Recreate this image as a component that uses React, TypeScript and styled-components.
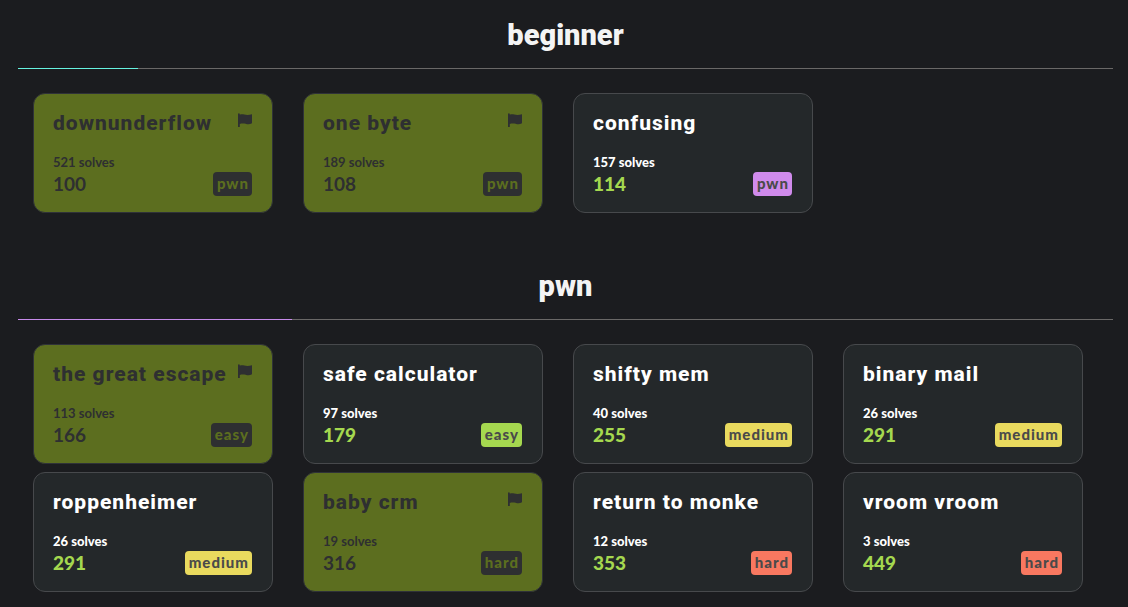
import React from "react";
import styled, { createGlobalStyle } from "styled-components";

const GlobalStyle = createGlobalStyle`
  * { box-sizing: border-box; }
  body {
    margin: 0;
    background: #1b1c1f;
    color: #ffffff;
    font-family: Lato, "Open Sans", sans-serif;
  }
`;

const tagColors = {
  pwn: "#d08bec",
  easy: "#a5d84f",
  medium: "#e9da5e",
  hard: "#f87860",
};

type Tag = keyof typeof tagColors;

interface Challenge {
  name: string;
  solves: number;
  points: number;
  tag: Tag;
  solved?: boolean;
}

interface Category {
  name: string;
  accent: string;
  progress: number;
  challenges: Challenge[];
}

const categories: Category[] = [
  {
    name: "beginner",
    accent: "#66f2e0",
    progress: 11,
    challenges: [
      { name: "downunderflow", solves: 521, points: 100, tag: "pwn", solved: true },
      { name: "one byte", solves: 189, points: 108, tag: "pwn", solved: true },
      { name: "confusing", solves: 157, points: 114, tag: "pwn" },
    ],
  },
  {
    name: "pwn",
    accent: "#c78bea",
    progress: 25,
    challenges: [
      { name: "the great escape", solves: 113, points: 166, tag: "easy", solved: true },
      { name: "safe calculator", solves: 97, points: 179, tag: "easy" },
      { name: "shifty mem", solves: 40, points: 255, tag: "medium" },
      { name: "binary mail", solves: 26, points: 291, tag: "medium" },
      { name: "roppenheimer", solves: 26, points: 291, tag: "medium" },
      { name: "baby crm", solves: 19, points: 316, tag: "hard", solved: true },
      { name: "return to monke", solves: 12, points: 353, tag: "hard" },
      { name: "vroom vroom", solves: 3, points: 449, tag: "hard" },
    ],
  },
];

const Page = styled.main`
  display: flex;
  flex-direction: column;
  gap: 49px;
  padding: 15px 15px 0 18px;
`;

const Heading = styled.h2`
  margin: 0 0 13px;
  text-align: center;
  color: #f4f4f4;
  font-family: Roboto, "Open Sans", sans-serif;
  font-size: 29px;
  font-weight: 900;
  line-height: 40px;
`;

const Track = styled.div`
  height: 1px;
  margin-bottom: 20px;
  background: #6a6867;
`;

const Progress = styled.div<{ $accent: string }>`
  height: 100%;
  background: ${(p) => p.$accent};
`;

const Grid = styled.div`
  display: flex;
  flex-wrap: wrap;
`;

const Card = styled.article<{ $solved?: boolean }>`
  display: flex;
  flex-direction: column;
  justify-content: space-between;
  width: 240px;
  height: 120px;
  margin: 4px 15px;
  padding: 15px 20px 15px 19px;
  border: 1px solid ${(p) => (p.$solved ? "#2f3238" : "#47494c")};
  border-radius: 12px;
  background: ${(p) => (p.$solved ? "#5c6e1f" : "#24282a")};
  color: ${(p) => (p.$solved ? "#2e2f31" : "#ffffff")};
`;

const CardTop = styled.div`
  display: flex;
  justify-content: space-between;
`;

const Title = styled.h3`
  margin: 0;
  font-family: Roboto, "Open Sans", sans-serif;
  font-size: 21px;
  font-weight: 800;
  letter-spacing: 1px;
  line-height: 28px;
  white-space: nowrap;
`;

const Flag = styled.svg`
  flex: none;
  width: 14px;
  height: 14px;
  margin-top: 4px;
`;

const CardBottom = styled.div`
  display: flex;
  justify-content: space-between;
  align-items: flex-end;
`;

const Solves = styled.div<{ $solved?: boolean }>`
  font-size: 13px;
  font-weight: ${(p) => (p.$solved ? 700 : 900)};
  line-height: 18px;
`;

const Points = styled.div<{ $solved?: boolean }>`
  color: ${(p) => (p.$solved ? "#2e2f31" : "#a5d84f")};
  font-size: 19px;
  font-weight: ${(p) => (p.$solved ? 700 : 900)};
  line-height: 26px;
`;

const Badge = styled.span<{ $tag: Tag; $solved?: boolean }>`
  margin-bottom: 1px;
  padding: 0 3px 2px 4px;
  border-radius: 4px;
  background: ${(p) => (p.$solved ? "#2e2f31" : tagColors[p.$tag])};
  color: ${(p) => (p.$solved ? "#5c6e1f" : "#4a4a4a")};
  font-size: 15px;
  font-weight: 900;
  letter-spacing: 1px;
  line-height: 22px;
`;

const ChallengeCard = ({ name, solves, points, tag, solved }: Challenge) => (
  <Card $solved={solved}>
    <CardTop>
      <Title>{name}</Title>
      {solved && (
        <Flag viewBox="0 0 14 14" role="img" aria-label="solved">
          <path
            fill="currentColor"
            d="M0 .7Q.9-.4 1.8.7V1.8C5 .2 7.500 3.500 14 1.300V10.300C9.500 12.800 6.500 9.200 1.800 11V14H0Z"
          />
        </Flag>
      )}
    </CardTop>
    <CardBottom>
      <div>
        <Solves $solved={solved}>{solves} solves</Solves>
        <Points $solved={solved}>{points}</Points>
      </div>
      <Badge $tag={tag} $solved={solved}>{tag}</Badge>
    </CardBottom>
  </Card>
);

const App = () => (
  <>
    <GlobalStyle />
    <Page>
      {categories.map((category) => (
        <section key={category.name}>
          <Heading>{category.name}</Heading>
          <Track>
            <Progress $accent={category.accent} style={{ width: `${category.progress}%` }} />
          </Track>
          <Grid>
            {category.challenges.map((challenge) => (
              <ChallengeCard key={challenge.name} {...challenge} />
            ))}
          </Grid>
        </section>
      ))}
    </Page>
  </>
);

export default App;
